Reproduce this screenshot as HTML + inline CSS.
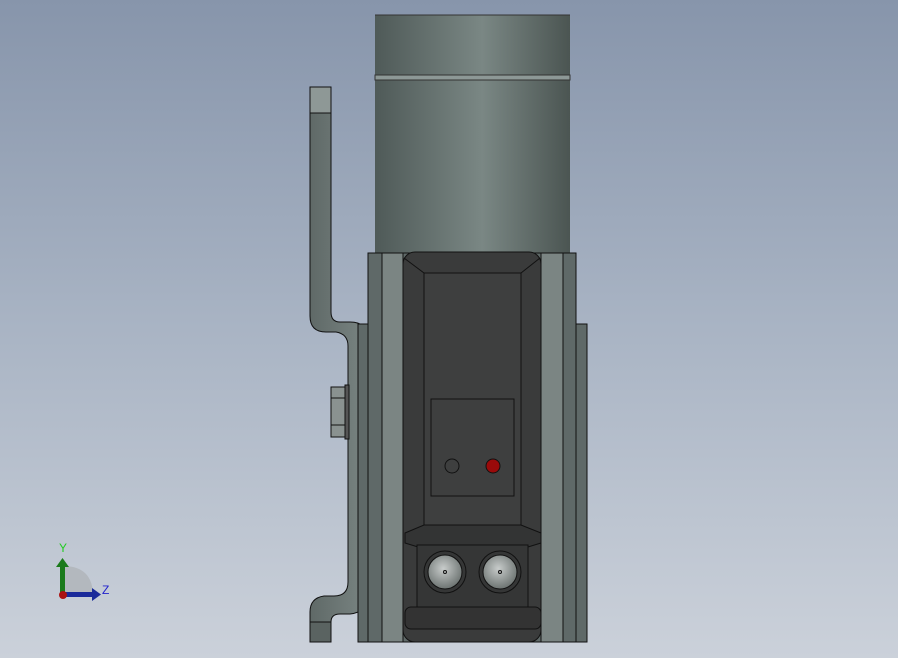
<!DOCTYPE html><html style="margin:0;width:898px;height:658px;overflow:hidden"><head><style>body{margin:0;width:898px;height:658px;overflow:hidden;background:linear-gradient(#8795ab,#a9b4c4 50%,#cbd1da);font-family:"Liberation Sans",sans-serif}svg{display:block}</style></head><body>
<svg width="898" height="658" viewBox="0 0 898 658" xmlns="http://www.w3.org/2000/svg" stroke="#111" stroke-width="1">
<defs>
<linearGradient id="cyl" x1="0" x2="1"><stop offset="0" stop-color="#4f5a58"/><stop offset="0.55" stop-color="#7a8784"/><stop offset="1" stop-color="#4b5552"/></linearGradient>
<linearGradient id="br" x1="0" x2="1"><stop offset="0" stop-color="#5f6967"/><stop offset="1" stop-color="#7a8583"/></linearGradient>
<radialGradient id="btn" cx="0.45" cy="0.4" r="0.6"><stop offset="0" stop-color="#c8cccb"/><stop offset="1" stop-color="#6d7472"/></radialGradient>
</defs>
<rect x="375" y="15" width="195" height="240" fill="url(#cyl)" stroke="none"/>
<line x1="375" y1="15" x2="570" y2="15" stroke="#333"/>
<rect x="375" y="75" width="195" height="5" fill="#8d9896" stroke="#333"/>
<path d="M310 87V316Q310 332 326 332H336Q348 334 348 346V582Q348 596 334 596H324Q310 598 310 612V642H331V622Q331 614 340 614H350Q368 612 368 596V340Q368 322 350 322H340Q331 322 331 312V87Z" fill="url(#br)"/>
<rect x="310" y="87" width="21" height="26" fill="#8e9896"/>
<rect x="310" y="622" width="21" height="20" fill="#5a6361"/>
<rect x="331" y="387" width="14" height="50" fill="#8a9290"/>
<line x1="331" y1="398" x2="345" y2="398"/><line x1="331" y1="425" x2="345" y2="425"/>
<rect x="345" y="385" width="4" height="54" fill="#555"/>
<rect x="358" y="324" width="229" height="318" fill="#5f6968"/>
<rect x="368" y="253" width="208" height="389" fill="#5f6968"/>
<rect x="382" y="253" width="21" height="389" fill="#7b8583"/>
<rect x="541" y="253" width="22" height="389" fill="#7b8583"/>
<line x1="576" y1="324" x2="576" y2="642"/>
<rect x="403" y="252" width="138" height="390" rx="12" fill="#3a3b3b"/>
<rect x="424" y="273" width="97" height="252" fill="#3e3f3f"/>
<path d="M404 258l20 15M540 258l-19 15" fill="none"/>
<rect x="431" y="399" width="83" height="97" fill="#3e3f3f"/>
<circle cx="452" cy="466" r="7" fill="#3e3f3f"/>
<circle cx="493" cy="466" r="7" fill="#9a0a0a"/>
<path d="M405 533l19-8h97l20 8v10l-13 4H418l-13-4z" fill="#333434"/>
<rect x="417" y="545" width="111" height="82" fill="#353636"/>
<rect x="405" y="607" width="136" height="22" rx="6" fill="#333"/>
<circle cx="445" cy="572" r="21" fill="#353636"/><circle cx="445" cy="572" r="17" fill="url(#btn)"/><circle cx="445" cy="572" r="1.5" fill="none"/>
<circle cx="500" cy="572" r="21" fill="#353636"/><circle cx="500" cy="572" r="17" fill="url(#btn)"/><circle cx="500" cy="572" r="1.5" fill="none"/>
<path d="M63 566q30 0 30 30h-30z" fill="#b3b8be" stroke="none"/>
<rect x="60" y="565" width="5" height="30" fill="#1a7a1a" stroke="none"/>
<path d="M56 567l6.5-9 6.5 9z" fill="#1a7a1a" stroke="none"/>
<rect x="63" y="592" width="30" height="5" fill="#1a2a9a" stroke="none"/>
<path d="M92 588l9 6.5-9 6.5z" fill="#1a2a9a" stroke="none"/>
<circle cx="63" cy="595" r="4" fill="#a11" stroke="none"/>
<text x="59" y="552" font-size="12" fill="#2c2" stroke="none">Y</text>
<text x="102" y="594" font-size="12" fill="#22c" stroke="none">Z</text>
</svg></body></html>
